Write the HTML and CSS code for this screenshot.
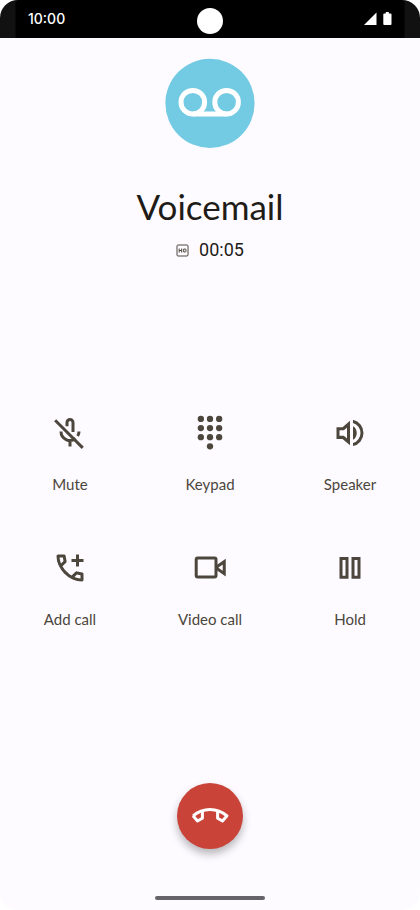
FILE: index.html
```html
<!DOCTYPE html>
<html lang="en">
<head>
<meta charset="utf-8">
<meta name="viewport" content="width=device-width, initial-scale=1">
<title>Voicemail call</title>
<link rel="stylesheet" href="styles.css">
</head>
<body>
<div class="phone">
  <header class="status">
    <time class="clock">10:00</time>
    <span class="camera"></span>
    <svg class="indicators" viewBox="0 0 28 14" aria-hidden="true">
      <path d="M0 13 12.500 0.500V13Z"/>
      <path d="M19.300 2.500q0-1 1-1h1.500V0h3v1.500H26.500q1 0 1 1V12q0 1-1 1h-6.200q-1 0-1-1Z"/>
    </svg>
  </header>

  <main class="call">
    <section class="caller">
      <svg class="avatar" viewBox="0 0 90 90" aria-hidden="true">
        <circle class="avatar-disc" cx="45" cy="45.400" r="44.600"/>
        <g class="avatar-tape">
          <circle cx="27.800" cy="44.200" r="11.800"/>
          <circle cx="61.600" cy="44.200" r="11.800"/>
          <path d="M28 56H61.600"/>
        </g>
      </svg>
      <h1 class="name">Voicemail</h1>
      <p class="duration">
        <svg class="hd" viewBox="0 0 13 13" role="img" aria-label="HD">
          <rect x="1" y="1" width="11" height="11" rx="1"/>
          <path d="M3.200 4.500v4M5.700 4.500v4M3.200 6.500h2.500M7.700 5v3h1.300q1 0 1-1v-1q0-1-1-1Z"/>
        </svg>
        <span>00:05</span>
      </p>
    </section>

    <section class="controls">
      <button class="control" type="button">
        <svg class="icon" viewBox="0 0 24 24" aria-hidden="true">
          <path class="line" d="M10 7.500V5a2 2 0 0 1 4 0v6.300M6 11a6 6 0 0 0 9.700 4.700M18 11q0 1.600-.900 3M12 17v4"/>
          <path d="M19.800 22.600 1.400 4.200 2.800 2.800 21.200 21.200Z"/>
        </svg>
        <span>Mute</span>
      </button>
      <button class="control" type="button">
        <svg class="icon" viewBox="0 0 24 24" aria-hidden="true">
          <circle cx="5.900" cy="2.600" r="2.100"/><circle cx="12" cy="2.600" r="2.100"/><circle cx="18.100" cy="2.600" r="2.100"/>
          <circle cx="5.900" cy="8.700" r="2.100"/><circle cx="12" cy="8.700" r="2.100"/><circle cx="18.100" cy="8.700" r="2.100"/>
          <circle cx="5.900" cy="14.800" r="2.100"/><circle cx="12" cy="14.800" r="2.100"/><circle cx="18.100" cy="14.800" r="2.100"/>
          <circle cx="12" cy="20.900" r="2.100"/>
        </svg>
        <span>Keypad</span>
      </button>
      <button class="control" type="button">
        <svg class="icon" viewBox="0 0 24 24" aria-hidden="true">
          <path d="M14 20.725v-2.050q2.250-.650 3.625-2.500t1.375-4.200q0-2.350-1.375-4.200T14 5.275v-2.050q3.100.700 5.050 3.138Q21 8.800 21 11.975q0 3.175-1.950 5.612-1.950 2.438-5.050 3.138ZM3 16V8.200h4l5-4.400v16.400l-5-4.200Zm11 .500V7.450q1.175.550 1.838 1.850.662 1.200.662 2.700 0 1.375-.662 2.662Q15.175 15.950 14 16.500ZM10 8.500 7.850 10.200H5v3.600h2.850L10 15.700Z"/>
        </svg>
        <span>Speaker</span>
      </button>
      <button class="control" type="button">
        <svg class="icon" viewBox="0 0 24 24" aria-hidden="true">
          <path d="M16 11V8h-3V6h3V3h2v3h3v2h-3v3Z"/>
          <path d="M19.950 21q-3.125 0-6.175-1.363-3.050-1.362-5.550-3.862-2.500-2.500-3.862-5.550Q3 7.175 3 4.050q0-.450.300-.750t.750-.300H8.100q.350 0 .625.238.275.237.325.562l.650 3.500q.050.400-.025.675-.075.275-.275.475L6.975 10.900q.500.925 1.188 1.787.687.863 1.512 1.663.775.775 1.625 1.438.850.662 1.800 1.212l2.350-2.350q.225-.225.588-.338.362-.112.712-.062l3.450.700q.350.100.575.363.225.262.225.587v4.050q0 .450-.300.750t-.750.300ZM6.025 9l1.650-1.650L7.250 5H5.025q.125 1.025.350 2.025.225 1 .650 1.975Zm8.950 8.950q.975.425 1.988.675 1.012.250 2.037.325v-2.200l-2.350-.475Z"/>
        </svg>
        <span>Add call</span>
      </button>
      <button class="control" type="button">
        <svg class="icon" viewBox="0 0 24 24" aria-hidden="true">
          <rect class="line" x="2.800" y="5.400" width="13.200" height="12.600" rx="1"/>
          <path class="line" d="M16.800 11 21.500 7.800V15.800L16.800 12.500Z"/>
        </svg>
        <span>Video call</span>
      </button>
      <button class="control" type="button">
        <svg class="icon" viewBox="0 0 24 24" aria-hidden="true">
          <path class="line" d="M6 5.700h4v12.500H6ZM14 5.700h4v12.500h-4Z"/>
        </svg>
        <span>Hold</span>
      </button>
    </section>

    <button class="hangup" type="button" aria-label="End call">
      <svg class="hangup-icon" viewBox="0 0 40 20" aria-hidden="true">
        <path d="M3 9.800Q10.500 3.400 20 3.400T37 9.800L32.500 15 27.600 12.300V5.200M3 9.800 7.500 15 12.400 12.300V5.200"/>
      </svg>
    </button>
  </main>

  <footer class="gesture"><span class="gesture-bar"></span></footer>
</div>
</body>
</html>
```
FILE: styles.css
```css
* {
  box-sizing: border-box;
}

body {
  margin: 0;
  background: #fff;
  color: #1f1c18;
  font-family: Lato, "Liberation Sans", sans-serif;
}

.phone {
  display: flex;
  flex-direction: column;
  min-height: 100vh;
  overflow: hidden;
  border-radius: 18px;
  background: #fdfbff;
}

.status {
  display: grid;
  grid-template-columns: 1fr auto 1fr;
  align-items: center;
  height: 38px;
  padding: 4px 28px 0;
  background: linear-gradient(90deg, #111 15px, #000 16px, #000 calc(100% - 16px), #111 calc(100% - 15px));
  color: #fff;
}

.clock {
  margin-bottom: 4px;
  font: 500 14px/16px Inter, sans-serif;
}

.camera {
  width: 26px;
  height: 26px;
  border-radius: 50%;
  background: #fff;
}

.indicators {
  justify-self: end;
  width: 28px;
  height: 14px;
  margin-bottom: 4px;
  fill: #fff;
}

.call {
  display: flex;
  flex: 1;
  flex-direction: column;
  align-items: center;
  padding-top: 20px;
}

.caller {
  display: flex;
  flex-direction: column;
  align-items: center;
}

.avatar {
  width: 90px;
  height: 90px;
}

.avatar-disc {
  fill: #73cae3;
}

.avatar-tape {
  fill: none;
  stroke: #fff;
  stroke-width: 5;
}

.name {
  margin: 34px 0 0;
  font-size: 35px;
  font-weight: 400;
  line-height: 48px;
}

.duration {
  display: flex;
  align-items: center;
  gap: 10px;
  margin: 8px 0 0;
  font: 400 18px/24px Roboto, sans-serif;
}

.hd {
  width: 13px;
  height: 13px;
  fill: none;
  stroke: #4c463c;
  stroke-width: 1;
}

.controls {
  display: grid;
  grid-template-columns: repeat(3, 1fr);
  row-gap: 56px;
  width: 100%;
  margin-top: 153px;
}

.control {
  display: flex;
  flex-direction: column;
  align-items: center;
  gap: 23px;
  padding: 0;
  border: 0;
  background: none;
  color: #4c463c;
  font-family: inherit;
  font-size: 15px;
  line-height: 20px;
}

.icon {
  width: 36px;
  height: 36px;
  fill: currentColor;
}

.line {
  fill: none;
  stroke: currentColor;
  stroke-width: 2;
}

.hangup {
  display: grid;
  place-items: center;
  width: 66px;
  height: 66px;
  margin: auto 0 47px;
  padding: 0;
  border: 0;
  border-radius: 50%;
  background: #c94338;
  box-shadow: 0 5px 9px rgb(0 0 0 / 28%);
}

.hangup-icon {
  width: 40px;
  height: 20px;
  fill: none;
  stroke: #fff;
  stroke-width: 3;
  stroke-linejoin: round;
}

.gesture {
  display: flex;
  justify-content: center;
  padding-bottom: 10px;
}

.gesture-bar {
  width: 110px;
  height: 4px;
  border-radius: 2px;
  background: #66636a;
}
```
